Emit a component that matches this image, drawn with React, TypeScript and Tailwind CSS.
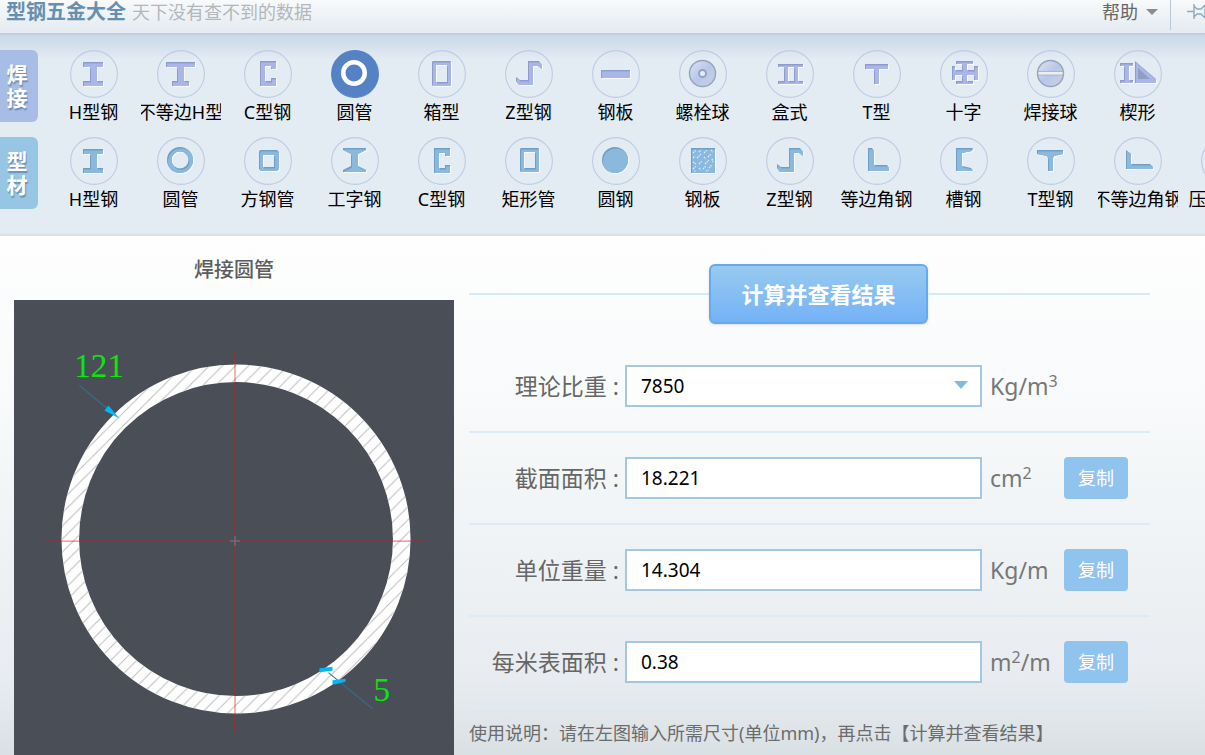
import { useId, useState } from "react";

type Tone = "weld" | "profile";

interface Shape {
  id: string;
  label: string;
  icon: string;
}

const TONES: Record<Tone, { base: string; shade: string }> = {
  weld: { base: "#a9b6ea", shade: "#8f9ccb" },
  profile: { base: "#8bb9de", shade: "#6f9fc4" },
};

// outlines are drawn in a 48x48 box
const OUTLINES: Record<string, string> = {
  h: "M13 12H33V17H27V31H33V36H13V31H20V17H13Z",
  unequalH: "M9 12H38V17H27V31H32V36H15V31H20V17H9Z",
  c: "M16 11H32V19H27V16H21V31H27V28H32V36H16Z",
  ring: "M23 10A13 13 0 1 1 23 36A13 13 0 1 1 23 10ZM23 14.5A8.5 8.5 0 1 0 23 31.5A8.5 8.5 0 1 0 23 14.5Z",
  box: "M15 11H32L33 12V35L32 36H15L14 35V12ZM18 15V32H29V15Z",
  z: "M23 11H34L37 15V19L33 16H28V35H14L11 31V27L15 30H23Z",
  plate: "M9 20H38V28H9Z",
  twin: "M12 14H37V17H32V31H37V34H12V31H18V17H12ZM22 17V31H28V17Z",
  t: "M12 14H35V19H26V34H21V19H12Z",
  cross:
    "M16 11H33V14H27V20H34V16H38V30H34V25H27V31H33V34H16V31H22V25H15V30H12V16H15V20H22V14H16Z",
  wedge: "M6 13H19V16H15V30H19V33H6V30H10V16H6ZM21 11L42 29V33H21Z",
  square: "M16 13H33L35 15V32L33 34H17L15 32V15ZM19 18V30H30V18Z",
  i: "M12 11H35V13L27 17V29L35 33V35H12V33L20 29V17L12 13Z",
  rect: "M16 11H33L34 12V34L33 35H16L15 34V12ZM19 15V31H30V15Z",
  round: "M23 10A13 13 0 1 1 23 36A13 13 0 1 1 23 10Z",
  tread: "M12 11H36V36H12Z",
  l: "M15 11H19L21 14V28H34L36 31V34H15Z",
  channel: "M16 11H33L32 14L22 16V29L31 31L33 34H16Z",
  taperT: "M10 13H36V17L27 19L26 21V34H21V21L20 19L10 17Z",
  unequalL: "M12 13L17 17V27H36L39 30V32H12Z",
};

const WELDED: Shape[] = [
  { id: "w-h", label: "H型钢", icon: "h" },
  { id: "w-uh", label: "不等边H型", icon: "unequalH" },
  { id: "w-c", label: "C型钢", icon: "c" },
  { id: "w-pipe", label: "圆管", icon: "ring" },
  { id: "w-box", label: "箱型", icon: "box" },
  { id: "w-z", label: "Z型钢", icon: "z" },
  { id: "w-plate", label: "钢板", icon: "plate" },
  { id: "w-bolt", label: "螺栓球", icon: "boltBall" },
  { id: "w-twin", label: "盒式", icon: "twin" },
  { id: "w-t", label: "T型", icon: "t" },
  { id: "w-cross", label: "十字", icon: "cross" },
  { id: "w-ball", label: "焊接球", icon: "weldBall" },
  { id: "w-wedge", label: "楔形", icon: "wedge" },
];

const PROFILES: Shape[] = [
  { id: "p-h", label: "H型钢", icon: "h" },
  { id: "p-pipe", label: "圆管", icon: "ring" },
  { id: "p-square", label: "方钢管", icon: "square" },
  { id: "p-i", label: "工字钢", icon: "i" },
  { id: "p-c", label: "C型钢", icon: "c" },
  { id: "p-rect", label: "矩形管", icon: "rect" },
  { id: "p-round", label: "圆钢", icon: "round" },
  { id: "p-plate", label: "钢板", icon: "tread" },
  { id: "p-z", label: "Z型钢", icon: "z" },
  { id: "p-l", label: "等边角钢", icon: "l" },
  { id: "p-channel", label: "槽钢", icon: "channel" },
  { id: "p-t", label: "T型钢", icon: "taperT" },
  { id: "p-ul", label: "不等边角钢", icon: "unequalL" },
  { id: "p-deck", label: "压型钢板", icon: "plate" },
];

function BallIcon({ kind, gradient }: { kind: string; gradient: string }) {
  return (
    <>
      <defs>
        <linearGradient id={gradient} x1="0" y1="0" x2="1" y2="1">
          <stop offset="0" stopColor="#dfe5f0" />
          <stop offset="0.5" stopColor="#b9c6ea" />
          <stop offset="1" stopColor="#ccd3e2" />
        </linearGradient>
      </defs>
      <circle cx="23.5" cy="23.5" r="13" fill={`url(#${gradient})`} stroke="#93a6b8" strokeWidth="1.4" />
      {kind === "boltBall" ? (
        <circle cx="23.5" cy="23.5" r="3.5" fill="#e6ebf5" stroke="#93a3c4" strokeWidth="2" />
      ) : (
        <path d="M11 21.5H36V25H11Z" fill="#eceef2" stroke="#a3adbd" strokeWidth="0.8" />
      )}
    </>
  );
}

function ShapeIcon({ icon, tone, active }: { icon: string; tone: Tone; active: boolean }) {
  const id = useId();
  const { base, shade } = TONES[tone];
  const d = OUTLINES[icon];

  return (
    <svg viewBox="0 0 48 48" className="size-12 shrink-0" aria-hidden="true">
      <circle
        cx="24"
        cy="24"
        r="23.4"
        fill={active ? "#5582c5" : "none"}
        stroke={active ? "#5582c5" : "#bfcbe4"}
        strokeWidth="1.1"
      />
      {!d && <BallIcon kind={icon} gradient={id} />}
      {d && active && <path d={d} fill="#fff" fillRule="evenodd" />}
      {d && !active && (
        <>
          <clipPath id={id}>
            <path d={d} clipRule="evenodd" />
          </clipPath>
          <path d={d} fill="#f7fafd" fillRule="evenodd" transform="translate(1 1)" />
          <path d={d} fill={shade} fillRule="evenodd" />
          <g clipPath={`url(#${id})`}>
            <path d={d} fill={base} fillRule="evenodd" transform="translate(1 1.4)" />
          </g>
          {icon === "wedge" && <path d="M24 18L36 29H24Z" fill="#8f9fc0" />}
          {icon === "tread" && (
            <path
              d="M14 16l3-3M20 15l2-2M25 16l3-3M32 13l2 2M14 21l2-2M18 21l4-4M25 20l2 2M29 20l3-3M14 25l3 2M20 27l3-3M26 27l4-4M33 22l1 3M14 32l3-3M20 31l2 2M24 32l3-3M30 31l3-3M15 34l2 0M27 34l3-1"
              stroke="#e3eff8"
              strokeWidth="1.2"
              strokeDasharray="1.5 0.8"
              fill="none"
            />
          )}
        </>
      )}
    </svg>
  );
}

interface ShapeRowProps {
  title: string;
  tone: Tone;
  shapes: Shape[];
  selected: string;
  onSelect: (id: string) => void;
}

function ShapeRow({ title, tone, shapes, selected, onSelect }: ShapeRowProps) {
  return (
    <div className="flex items-start gap-3">
      <h2
        className={`flex h-[72px] w-[38px] shrink-0 items-center justify-center rounded-r-md pr-1 text-[21px] leading-6 font-bold text-white [text-shadow:1px_2px_1px_#6f8fb5] ${
          tone === "weld" ? "bg-[#a7bde5]" : "bg-[#96c6e4]"
        }`}
      >
        <span className="w-[21px] text-center">{title}</span>
      </h2>
      <div className="flex">
        {shapes.map((shape) => (
          <button
            key={shape.id}
            type="button"
            aria-pressed={shape.id === selected}
            onClick={() => onSelect(shape.id)}
            className="flex w-[87px] shrink-0 cursor-pointer flex-col items-center"
          >
            <ShapeIcon icon={shape.icon} tone={tone} active={shape.id === selected} />
            <span className="flex w-20 justify-center overflow-hidden text-lg leading-7 whitespace-nowrap text-black">
              {shape.label}
            </span>
          </button>
        ))}
      </div>
    </div>
  );
}

function PipeDrawing({ diameter, thickness }: { diameter: string; thickness: string }) {
  return (
    <svg viewBox="0 0 438 455" className="block w-full" role="img" aria-label="焊接圆管截面">
      <defs>
        <pattern id="hatch" width="13" height="13" patternUnits="userSpaceOnUse">
          <path d="M-1 14L14 -1M-1 1L1 -1M12 14L14 12" stroke="#bdbdbd" strokeWidth="1" />
        </pattern>
      </defs>
      <circle cx="221" cy="238" r="165" fill="none" stroke="#fff" strokeWidth="17.5" />
      <circle cx="221" cy="238" r="165" fill="none" stroke="url(#hatch)" strokeWidth="17.5" />

      <g stroke="#e01818" strokeOpacity="0.55" strokeWidth="1.2">
        <line x1="220" y1="51" x2="220" y2="429" />
        <line x1="31" y1="240" x2="410" y2="240" />
      </g>
      <path d="M215 240H225M220 235V245" stroke="#64809c" strokeWidth="1" />

      <path d="M65 85L94 109M313 371L357 407" stroke="#2f7391" strokeWidth="1" />
      <path d="M94 105L90 110L105 118Z" fill="#00b7f8" />
      <path d="M304 366.5L317 365L317 369L304 370.5ZM317 378.5L330 377L330 380L320 382.5H317Z" fill="#00b7f8" />

      <g fill="#0be60b" fontFamily="'Liberation Serif', serif" fontSize="33">
        <text x="60" y="77">{diameter}</text>
        <text x="358" y="399">{thickness}</text>
      </g>
    </svg>
  );
}

interface ResultRowProps {
  id: string;
  label: string;
  value: string;
  unit: React.ReactNode;
}

const rowClass =
  "grid h-[92px] grid-cols-[156px_1fr_82px_64px] items-center border-b-2 border-[#dbecf8] pr-[22px]";
const labelClass = "pr-[6px] text-right text-[23px] leading-8 text-[#666]";
const fieldClass =
  "h-[42px] w-full appearance-none border-2 border-[#a3c8e3] bg-white px-[14px] text-[19px] text-black outline-none";
const unitClass = "pl-2 text-[23px] leading-8 whitespace-nowrap text-[#777]";

function ResultRow({ id, label, value, unit }: ResultRowProps) {
  return (
    <div className={rowClass}>
      <label htmlFor={id} className={labelClass}>
        {label} :
      </label>
      <input id={id} readOnly value={value} className={fieldClass} />
      <span className={unitClass}>{unit}</span>
      <button
        type="button"
        onClick={() => navigator.clipboard?.writeText(value)}
        className="h-[42px] cursor-pointer rounded bg-[#91c3ef] text-lg text-white"
      >
        复制
      </button>
    </div>
  );
}

export default function App() {
  const [selected, setSelected] = useState("w-pipe");
  const [density, setDensity] = useState("7850");

  return (
    <div className="flex min-h-screen flex-col overflow-hidden bg-[#e3ebf3] font-['Noto_Sans','Noto_Sans_CJK_SC',sans-serif]">
      <header className="flex h-[35px] items-start border-b-2 border-[#c3cedd] bg-linear-to-b from-[#f8fafb] to-[#e4eaf1] pl-[6px] leading-6">
        <h1 className="text-xl leading-6 font-bold text-[#6690b0]">型钢五金大全</h1>
        <p className="ml-[6px] text-lg leading-6 text-[#b3b7ba]">天下没有查不到的数据</p>
        <button
          type="button"
          className="ml-auto flex cursor-pointer items-center gap-2 pr-3 text-lg leading-6 text-[#666]"
        >
          帮助
          <svg viewBox="0 0 12 6" className="h-[6px] w-3" aria-hidden="true">
            <path d="M0 0H12L6 6Z" fill="#8c8c8c" />
          </svg>
        </button>
        <span className="h-[30px] w-px bg-[#b9c8d6]" />
        <button type="button" aria-label="置顶" className="ml-4 h-6 w-[18px] cursor-pointer overflow-hidden">
          <svg viewBox="0 0 24 24" className="h-6 w-6" fill="none" stroke="#8dabc0" strokeWidth="1.4">
            <path d="M0 11.5H7M7 4V19M7 6L10 9H14L18 5V18L14 14H10L7 17" />
          </svg>
        </button>
      </header>

      <nav className="flex flex-col gap-[11px] bg-linear-to-b from-[#cad8ea] to-[#e3ebf3] to-[24px] pt-[15px] pb-[21px]">
        <ShapeRow title="焊接" tone="weld" shapes={WELDED} selected={selected} onSelect={setSelected} />
        <ShapeRow title="型材" tone="profile" shapes={PROFILES} selected={selected} onSelect={setSelected} />
      </nav>

      <main className="grid grow grid-cols-[2fr_3fr] gap-x-[15px] border-t-2 border-[#d9e0e6] bg-[linear-gradient(to_bottom,#fefefe,#f8fafb_30%,#f1f4f6_55%,#e8ecf0_85%,#d9e0e4)] pr-[55px]">
        <section className="pt-[18px] pl-[14px]">
          <h2 className="mb-[14px] text-center text-xl leading-8 font-medium text-[#5c5c5c]">焊接圆管</h2>
          <div className="bg-[#4a4e57]">
            <PipeDrawing diameter="121" thickness="5" />
          </div>
        </section>

        <section className="flex flex-col pt-7">
          <div className="flex items-center">
            <span className="h-[2px] grow bg-[#d6ebf9]" />
            <button
              type="button"
              className="h-[60px] w-[219px] cursor-pointer rounded-md border-2 border-[#66a9ef] bg-linear-to-b from-[#98caf0] to-[#74b2f7] text-[22px] font-bold text-white shadow-sm"
            >
              计算并查看结果
            </button>
            <span className="h-[2px] w-[222px] bg-[#d6ebf9]" />
          </div>

          <form className="mt-[17px]" onSubmit={(e) => e.preventDefault()}>
            <div className={rowClass}>
              <label htmlFor="density" className={labelClass}>
                理论比重 :
              </label>
              <div className="relative">
                <select
                  id="density"
                  value={density}
                  onChange={(e) => setDensity(e.target.value)}
                  className={fieldClass}
                >
                  <option value="7850">7850</option>
                </select>
                <svg
                  viewBox="0 0 14 8"
                  className="pointer-events-none absolute top-4 right-[14px] h-2 w-[14px]"
                  aria-hidden="true"
                >
                  <path d="M0 0H14L7 8Z" fill="#84b9e0" />
                </svg>
              </div>
              <span className={unitClass}>
                Kg/m<sup className="text-base">3</sup>
              </span>
            </div>
            <ResultRow
              id="area"
              label="截面面积"
              value="18.221"
              unit={
                <>
                  cm<sup className="text-base">2</sup>
                </>
              }
            />
            <ResultRow id="weight" label="单位重量" value="14.304" unit="Kg/m" />
            <ResultRow
              id="surface"
              label="每米表面积"
              value="0.38"
              unit={
                <>
                  m<sup className="text-base">2</sup>/m
                </>
              }
            />
          </form>

          <p className="mt-[10px] text-lg leading-7 text-[#6c6c6c]">
            使用说明：请在左图输入所需尺寸(单位mm)，再点击【计算并查看结果】
          </p>
        </section>
      </main>
    </div>
  );
}
